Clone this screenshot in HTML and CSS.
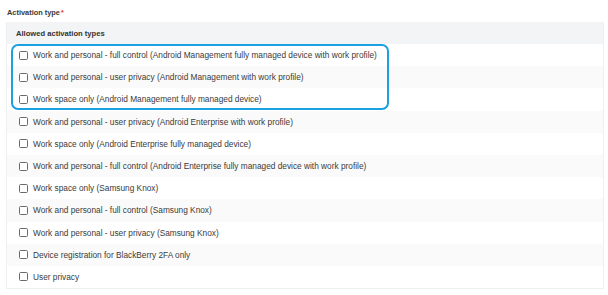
FILE: index.html
```html
<!DOCTYPE html>
<html>
<head>
<meta charset="utf-8">
<link rel="stylesheet" href="styles.css">
</head>
<body>
<div class="field">
  <div class="label">Activation type<span class="req">*</span></div>
  <div class="table">
    <div class="thead">Allowed activation types</div>
    <div class="row"><span class="box"></span>Work and personal - full control (Android Management fully managed device with work profile)</div>
    <div class="row"><span class="box"></span>Work and personal - user privacy (Android Management with work profile)</div>
    <div class="row"><span class="box"></span>Work space only (Android Management fully managed device)</div>
    <div class="row"><span class="box"></span>Work and personal - user privacy (Android Enterprise with work profile)</div>
    <div class="row"><span class="box"></span>Work space only (Android Enterprise fully managed device)</div>
    <div class="row"><span class="box"></span>Work and personal - full control (Android Enterprise fully managed device with work profile)</div>
    <div class="row"><span class="box"></span>Work space only (Samsung Knox)</div>
    <div class="row"><span class="box"></span>Work and personal - full control (Samsung Knox)</div>
    <div class="row"><span class="box"></span>Work and personal - user privacy (Samsung Knox)</div>
    <div class="row"><span class="box"></span>Device registration for BlackBerry 2FA only</div>
    <div class="row"><span class="box"></span>User privacy</div>
    <div class="highlight"></div>
  </div>
</div>
</body>
</html>
```
FILE: styles.css
```css
html, body {
  margin: 0;
  padding: 0;
  background: #ffffff;
}
body {
  font-family: "Liberation Sans", Arial, sans-serif;
  color: #333;
}
.field {
  padding: 7px 4px 0 6px;
}
.label {
  font-size: 7.4px;
  font-weight: bold;
  color: #3a3a3a;
  height: 15px;
  line-height: 11px;
  padding-left: 1px;
}
.req {
  color: #e0393e;
  margin-left: 1px;
  font-size: 7px;
  vertical-align: top;
}
.table {
  position: relative;
  border: 1px solid #eeeff0;
  border-top: none;
}
.thead {
  height: 22px;
  background: #f3f4f5;
  font-size: 7.6px;
  font-weight: bold;
  color: #333;
  display: flex;
  align-items: center;
  padding-left: 9px;
}
.row {
  height: 22.2px;
  display: flex;
  align-items: center;
  padding-left: 12px;
  font-size: 8.3px;
  color: #3a3a3a;
  white-space: nowrap;
}
.row:nth-child(odd) {
  background: #fafafa;
}
.box {
  width: 7px;
  height: 7px;
  border: 1px solid #6a6a6a;
  border-radius: 1.5px;
  margin-right: 5px;
  flex: none;
  background: #fff;
}
.highlight {
  position: absolute;
  left: 4px;
  top: 22px;
  width: 374px;
  height: 62px;
  border: 2px solid #1ba1e2;
  border-radius: 7px;
}
```
